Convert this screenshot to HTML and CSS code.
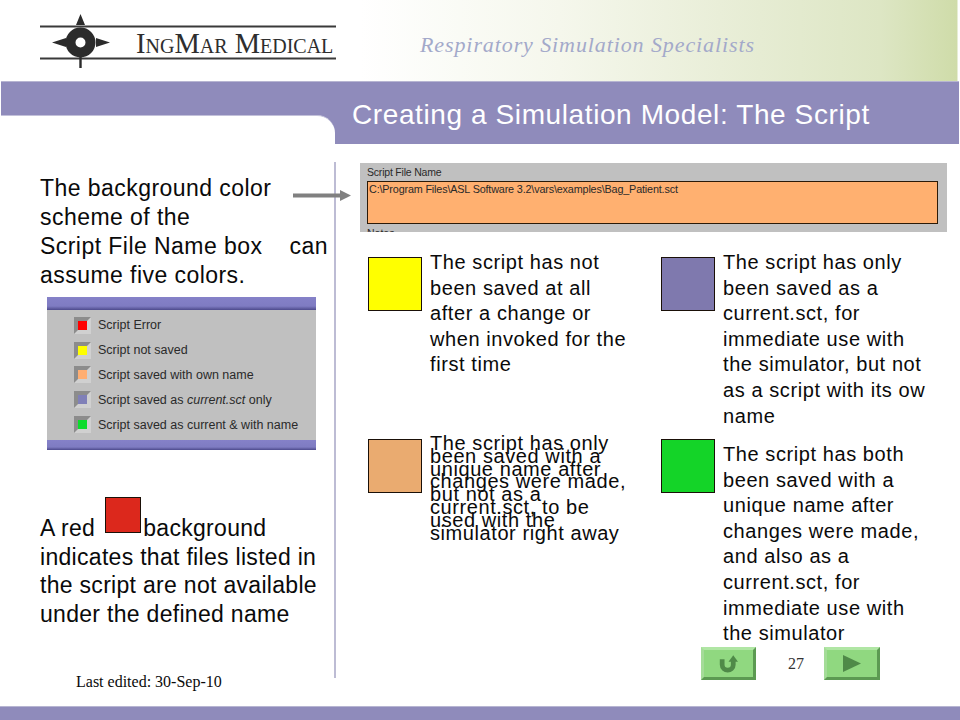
FILE: index.html
```html
<!DOCTYPE html>
<html lang="en">
<head>
<meta charset="utf-8">
<title>Creating a Simulation Model: The Script</title>
<link rel="stylesheet" href="styles.css">
</head>
<body>
<div class="slide">
  <header class="masthead">
    <svg class="logo" width="300" height="70" viewBox="0 0 300 70">
      <path class="logo-line" d="M0 26.5H296M0 58.5H296"/>
      <path class="logo-mark" d="M40.5 14L45 25H36ZM12 42.500L26 38V47ZM70 42.500L56 38V47ZM39.300 55H41.700V68H39.300Z"/>
      <circle class="logo-ring" cx="40.500" cy="42.500" r="10"/>
      <text class="logo-text" x="96" y="53">IngMar Medical</text>
    </svg>
    <div class="tagline">Respiratory Simulation Specialists</div>
  </header>
  <div class="band">
    <div class="band-notch"></div>
    <h1 class="title">Creating a Simulation Model: The Script</h1>
  </div>
  <main class="content">
    <section class="left">
      <p class="lead">The background color<br>scheme of the<br>Script File Name box<span class="can">can</span><br>assume five colors.</p>
      <div class="legend">
        <div class="legend-bar"></div>
        <ul class="legend-list">
          <li class="legend-row"><span class="led led-red"></span>Script Error</li>
          <li class="legend-row"><span class="led led-yellow"></span>Script not saved</li>
          <li class="legend-row"><span class="led led-orange"></span>Script saved with own name</li>
          <li class="legend-row"><span class="led led-blue"></span>Script saved as&nbsp;<em>current.sct</em>&nbsp;only</li>
          <li class="legend-row"><span class="led led-green"></span>Script saved as current &amp; with name</li>
        </ul>
        <div class="legend-bar legend-bar-bottom"></div>
      </div>
      <p class="red-note">A red<span class="red-swatch"></span>background<br>indicates that files listed in<br>the script are not available<br>under the defined name</p>
      <p class="edited">Last edited: 30-Sep-10</p>
    </section>
    <section class="right">
      <div class="file-shot">
        <div class="file-label">Script File Name</div>
        <div class="file-box">C:\Program Files\ASL Software 3.2\vars\examples\Bag_Patient.sct</div>
        <div class="file-clip">Notes</div>
      </div>
      <div class="states">
        <div class="state state-top">
          <span class="swatch swatch-yellow"></span>
          <p class="state-text">The script has not<br>been saved at all<br>after a change or<br>when invoked for the<br>first time</p>
        </div>
        <div class="state state-top">
          <span class="swatch swatch-blue"></span>
          <p class="state-text">The script has only<br>been saved as a<br>current.sct, for<br>immediate use with<br>the simulator, but not<br>as a script with its ow<br>name</p>
        </div>
        <div class="state">
          <span class="swatch swatch-orange"></span>
          <p class="state-text state-text-tight">The script has only<br>been saved with a<br>unique name after<br>changes were made,<br>but not as a<br>current.sct, to be<br>used with the<br>simulator right away</p>
        </div>
        <div class="state">
          <span class="swatch swatch-green"></span>
          <p class="state-text state-text-low">The script has both<br>been saved with a<br>unique name after<br>changes were made,<br>and also as a<br>current.sct, for<br>immediate use with<br>the simulator</p>
        </div>
      </div>
      <nav class="pager">
        <span class="nav-btn">
          <svg class="icon-back" width="19" height="18" viewBox="0 0 24 22"><path class="nav-icon-stroke" d="M4 5V12C4 21 18 21 18 12V7"/><path class="nav-icon" d="M18 0L24 8H12Z"/></svg>
        </span>
        <span class="page-no">27</span>
        <span class="nav-btn nav-btn-next">
          <svg width="18" height="17" viewBox="0 0 18 17"><path class="nav-icon" d="M0 0L18 8.500L0 17Z"/></svg>
        </span>
      </nav>
    </section>
    <svg class="arrow" width="58" height="11" viewBox="0 0 58 11"><path class="arrow-path" d="M0 3.500H47V0L58 5.500L47 11V7.500H0Z"/></svg>
  </main>
  <div class="foot-band"></div>
</div>
</body>
</html>
```
FILE: styles.css
```css
* { box-sizing: border-box; }
html, body { margin: 0; padding: 0; background: #fff; }
p, ul, h1 { margin: 0; padding: 0; }
ul { list-style: none; }

.slide {
  width: 960px;
  height: 720px;
  display: flex;
  flex-direction: column;
  overflow: hidden;
  background: #fff;
  color: #0a0a0a;
  font-family: "Liberation Sans", Arial, sans-serif;
}

/* Masthead */
.masthead {
  height: 81px;
  flex: none;
  display: flex;
  align-items: flex-start;
  padding-left: 40px;
  background: linear-gradient(90deg, #fff 0, #fff 360px, #f5f7ec 560px, #e9eed8 720px, #dde6c4 880px, #cfdca9 957px, #fff 958px);
}
.logo { flex: none; display: block; }
.logo-line { stroke: #3a3a3a; stroke-width: 2; fill: none; }
.logo-mark { fill: #2b2b2b; }
.logo-ring { fill: #fff; stroke: #2b2b2b; stroke-width: 10; }
.logo-text {
  font-family: "Liberation Serif", serif;
  font-size: 28.500px;
  font-variant: small-caps;
  fill: #2e2e2e;
}
.tagline {
  margin: 32px 0 0 80px;
  font-family: "Liberation Serif", serif;
  font-style: italic;
  font-size: 22px;
  line-height: 26px;
  letter-spacing: 0.9px;
  color: #a3a9ca;
}

/* Title band */
.band {
  height: 63px;
  flex: none;
  display: flex;
  align-items: flex-end;
  margin: 0 1px;
  background: #8f8bbb;
  border-top: 1px solid #b7b5d2;
}
.band-notch {
  width: 334px;
  height: 29px;
  flex: none;
  background: #fff;
  border-top: 1px solid #c3c1da;
  border-top-right-radius: 18px;
}
.title {
  align-self: flex-start;
  margin: 15px 0 0 17px;
  font-size: 28px;
  line-height: 36px;
  font-weight: 400;
  letter-spacing: 0.6px;
  color: #fff;
  white-space: nowrap;
}

/* Content */
.content {
  position: relative;
  flex: 1;
  display: flex;
  min-height: 0;
}
.left {
  width: 336px;
  flex: none;
  margin: 18px 0 28px;
  padding-left: 40px;
  border-right: 2px solid #bdbcd4;
  font-size: 23px;
  letter-spacing: 0.45px;
}
.lead { margin-top: 12px; line-height: 29px; white-space: nowrap; }
.can { margin-left: 27px; }

.legend {
  width: 269px;
  height: 153px;
  margin: 7px 0 0 7px;
  display: flex;
  flex-direction: column;
  justify-content: space-between;
  background: #c0c0c0;
  color: #2a2a2a;
  font-size: 12.500px;
  letter-spacing: 0;
}
.legend-bar { height: 13px; background: linear-gradient(#8581c8 0, #7f7cc2 70%, #4d4a8c 100%); }
.legend-bar-bottom { height: 10px; }
.legend-list {
  flex: 1;
  padding: 3px 0 0 27px;
  display: flex;
  flex-direction: column;
}
.legend-row { height: 24.800px; display: flex; align-items: center; white-space: nowrap; }
.led {
  width: 17px;
  height: 17px;
  flex: none;
  margin-right: 7px;
  border: 4px solid;
  border-color: #8c8c8c #d0d0d0 #d0d0d0 #8c8c8c;
}
.led-red { background: #f00; }
.led-yellow { background: #ff0; }
.led-orange { background: #ffae72; }
.led-blue { background: #8080b8; }
.led-green { background: #0cdc2c; }

.red-note { margin-top: 47px; line-height: 28.500px; letter-spacing: 0.3px; white-space: nowrap; }
.red-swatch {
  display: inline-block;
  width: 36px;
  height: 36px;
  margin: 0 2px 0 10px;
  vertical-align: 3px;
  background: #dc281c;
  border: 1px solid #1a1008;
}
.edited {
  margin: 44px 0 0 36px;
  font-family: "Liberation Serif", serif;
  font-size: 16px;
  line-height: 20px;
  letter-spacing: 0;
}

.right { flex: 1; min-width: 0; padding: 19px 13px 0 24px; }
.file-shot {
  height: 69px;
  overflow: hidden;
  background: #c0c0c0;
  padding: 3px 9px 0 7px;
  color: #2a2a2a;
  font-size: 10.500px;
  line-height: 13px;
}
.file-label { letter-spacing: -0.2px; }
.file-box {
  height: 43px;
  margin-top: 2px;
  padding: 1px;
  border: 1px solid #2b1a08;
  background: #ffb070;
  font-size: 10.800px;
  letter-spacing: -0.16px;
}
.file-clip { margin-top: 3px; }

.states {
  display: grid;
  grid-template-columns: 293px 1fr;
  grid-template-rows: 182px 208px;
  margin-top: 25px;
  padding-left: 8px;
}
.state { display: flex; gap: 8px; align-items: flex-start; min-height: 0; }
.swatch {
  width: 54px;
  height: 54px;
  flex: none;
  border: 1px solid #1a1008;
}
.swatch-yellow { background: #ff0; }
.swatch-blue { background: #7f79ae; }
.swatch-orange { background: #eaab70; }
.swatch-green { background: #14d428; }
.state-text {
  font-size: 20px;
  letter-spacing: 0.58px;
  line-height: 25.600px;
  margin-top: -7px;
  white-space: nowrap;
}
.state-text-tight { line-height: 12.800px; margin-top: -2px; }
.state-text-low { margin-top: 3px; }

.pager {
  position: absolute;
  right: 80px;
  top: 503px;
  display: flex;
  align-items: center;
}
.nav-btn {
  width: 55px;
  height: 33px;
  display: flex;
  align-items: center;
  justify-content: center;
  background: #90d880;
  border: 3px solid;
  border-color: #b0e6a4 #5c9a52 #5c9a52 #a4dc98;
}
.nav-btn-next { margin-left: 4px; width: 56px; }
.nav-icon { fill: #4f8a48; }
.nav-icon-stroke { fill: none; stroke: #4f8a48; stroke-width: 6; }
.page-no {
  width: 48px;
  margin-left: 16px;
  text-align: center;
  font-family: "Liberation Serif", serif;
  font-size: 16px;
  color: #333;
}
.arrow { position: absolute; left: 293px; top: 46px; }
.arrow-path { fill: #808080; }

.foot-band {
  height: 14px;
  flex: none;
  background: #8f8bbb;
  border-top: 1px solid #b7b5d2;
}
```
